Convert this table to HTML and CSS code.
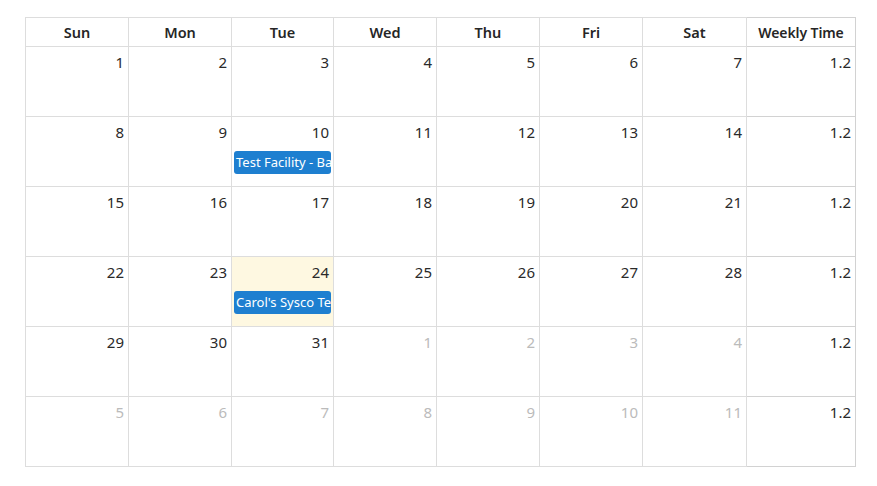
FILE: index.html
```html
<!DOCTYPE html>
<html>
<head>
<meta charset="utf-8">
<link rel="stylesheet" href="styles.css">
</head>
<body>
<table class="cal">
  <colgroup>
    <col class="c-a"><col class="c-a"><col class="c-b"><col class="c-a"><col class="c-a"><col class="c-a"><col class="c-c"><col class="c-week">
  </colgroup>
  <thead>
    <tr><th>Sun</th><th>Mon</th><th>Tue</th><th>Wed</th><th>Thu</th><th>Fri</th><th>Sat</th><th class="wk">Weekly Time</th></tr>
  </thead>
  <tbody>
    <tr><td><div class="num">1</div></td><td><div class="num">2</div></td><td><div class="num">3</div></td><td><div class="num">4</div></td><td><div class="num">5</div></td><td><div class="num">6</div></td><td><div class="num">7</div></td><td class="wk"><div class="num">1.2</div></td></tr>
    <tr><td><div class="num">8</div></td><td><div class="num">9</div></td><td><div class="num">10</div><div class="ev">Test Facility - Bake Shop</div></td><td><div class="num">11</div></td><td><div class="num">12</div></td><td><div class="num">13</div></td><td><div class="num">14</div></td><td class="wk"><div class="num">1.2</div></td></tr>
    <tr><td><div class="num">15</div></td><td><div class="num">16</div></td><td><div class="num">17</div></td><td><div class="num">18</div></td><td><div class="num">19</div></td><td><div class="num">20</div></td><td><div class="num">21</div></td><td class="wk"><div class="num">1.2</div></td></tr>
    <tr><td><div class="num">22</div></td><td><div class="num">23</div></td><td class="today"><div class="num">24</div><div class="ev">Carol's Sysco Test</div></td><td><div class="num">25</div></td><td><div class="num">26</div></td><td><div class="num">27</div></td><td><div class="num">28</div></td><td class="wk"><div class="num">1.2</div></td></tr>
    <tr><td><div class="num">29</div></td><td><div class="num">30</div></td><td><div class="num">31</div></td><td class="other"><div class="num">1</div></td><td class="other"><div class="num">2</div></td><td class="other"><div class="num">3</div></td><td class="other"><div class="num">4</div></td><td class="wk"><div class="num">1.2</div></td></tr>
    <tr><td class="other"><div class="num">5</div></td><td class="other"><div class="num">6</div></td><td class="other"><div class="num">7</div></td><td class="other"><div class="num">8</div></td><td class="other"><div class="num">9</div></td><td class="other"><div class="num">10</div></td><td class="other"><div class="num">11</div></td><td class="wk"><div class="num">1.2</div></td></tr>
  </tbody>
</table>
</body>
</html>
```
FILE: styles.css
```css
html, body {
  margin: 0;
  padding: 0;
  background: #fff;
}
body {
  padding: 17px 0 0 25px;
  font-family: "Noto Sans", "DejaVu Sans", sans-serif;
  color: #222;
}
.cal {
  border-collapse: collapse;
  table-layout: fixed;
  width: 831px;
}
.c-a { width: 103px; }
.c-b { width: 102px; }
.c-c { width: 104px; }
.c-week { width: 109px; }
.cal th, .cal td {
  border: 1px solid #dddddd;
  padding: 0;
}
.cal th {
  height: 28px;
  font-size: 14.5px;
  font-weight: 600;
  color: #262626;
  text-align: center;
  vertical-align: middle;
}
.cal th.wk, .cal td.wk {
  border-color: #d2d2d2;
}
.cal th.wk {
  font-size: 14px;
  letter-spacing: -0.1px;
}
.cal td {
  height: 69px;
  vertical-align: top;
}
.num {
  text-align: right;
  font-size: 15px;
  line-height: 20px;
  padding: 5px 4px 0 0;
  color: #2a2a2a;
}
.other .num {
  color: #bbbbbb;
}
.today {
  background: #fef8e1;
}
.ev {
  margin: 9px 2px 0 2px;
  height: 23px;
  line-height: 23px;
  background: #1e7fd0;
  color: #fff;
  font-size: 13px;
  padding-left: 2px;
  border-radius: 3px;
  white-space: nowrap;
  overflow: hidden;
}
```
